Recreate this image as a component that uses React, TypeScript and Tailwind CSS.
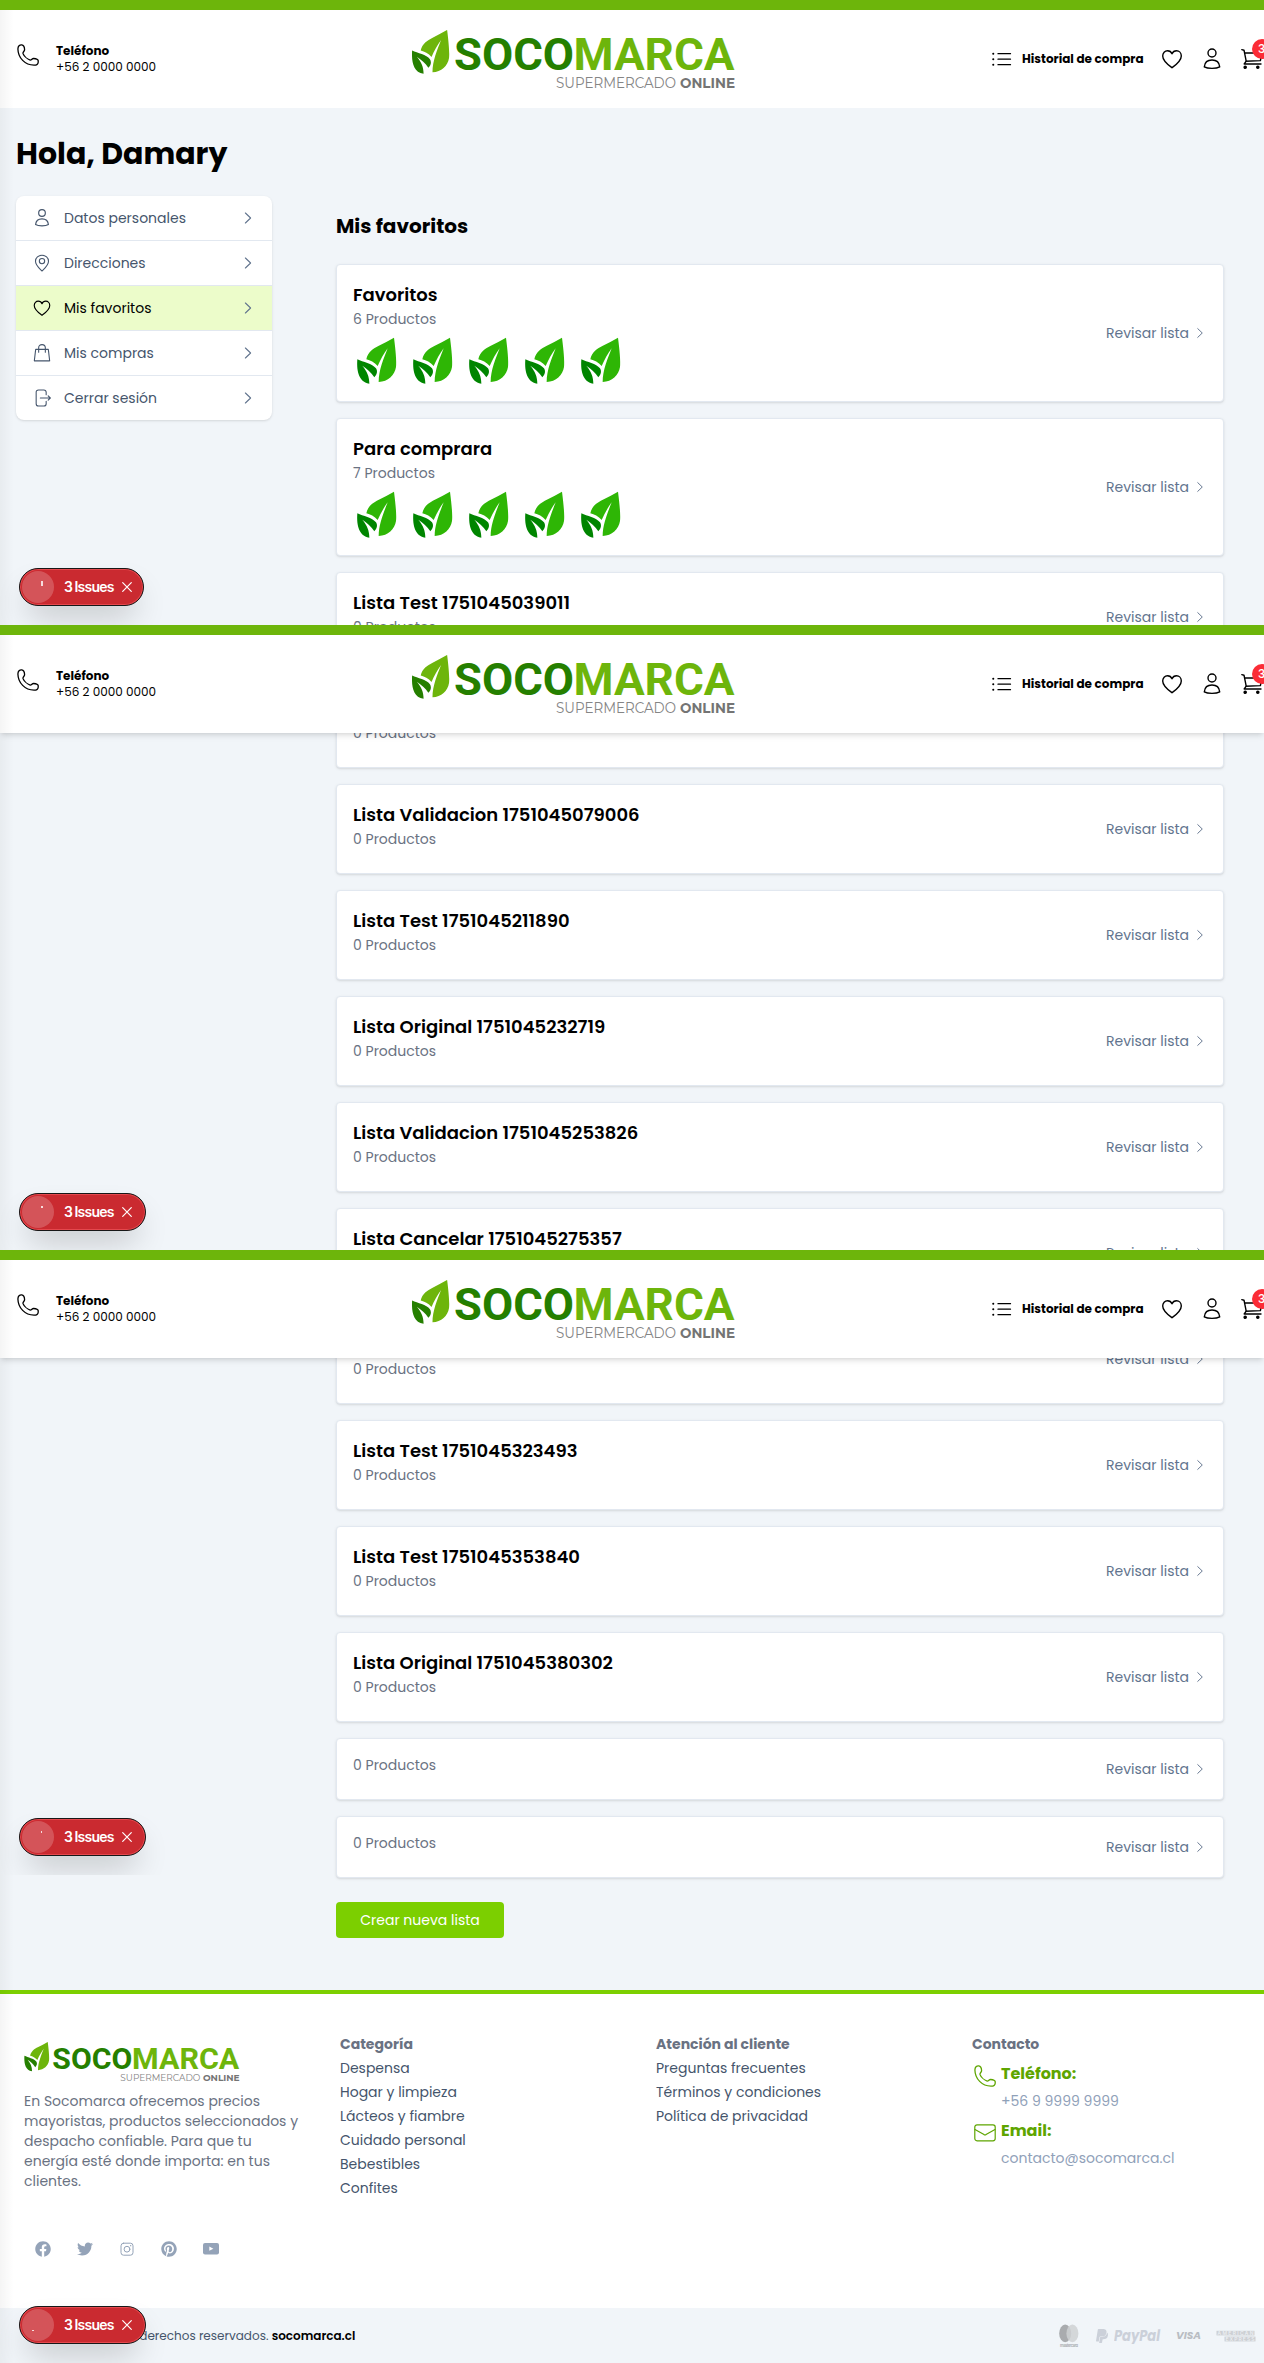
import React from "react";
import { FaFacebook, FaPaypal, FaPinterest, FaTwitter } from "react-icons/fa";

type IconProps = { className?: string };

const thin = {
  fill: "none",
  stroke: "currentColor",
  strokeLinecap: "round" as const,
  strokeLinejoin: "round" as const,
};

function LeafShape({ light, dark }: { light: string; dark: string }) {
  return (
    <>
      <path
        fill={light}
        d="M123 2C128 40 131 75 129 90C125 115 105 134 77 135C77 100 92 65 104 34C92 50 82 69 74 87C64 76 52 70 40 67C44 45 62 34 76 27C92 19 108 11 123 2Z"
      />
      <path
        fill={dark}
        d="M13 67C11 95 14 135 49 140C49 118 42 103 28 86C42 96 55 106 64 121C73 112 74 102 69 94C58 80 30 75 13 67Z"
      />
    </>
  );
}

function ProductLeaf() {
  return (
    <svg viewBox="0 0 144 144" className="h-12 w-12">
      <LeafShape light="#2eb605" dark="#008500" />
    </svg>
  );
}

function Logo({ className }: IconProps) {
  return (
    <svg viewBox="0 0 323 60" className={className}>
      <g transform="translate(-4 -0.7) scale(0.318)">
        <LeafShape light="#6db50b" dark="#257f00" />
      </g>
      <g fontFamily="Roboto, sans-serif" fontWeight="700" fontSize="45">
        <text x="42" y="40" fill="#257f00" textLength="120" lengthAdjust="spacingAndGlyphs">
          SOCO
        </text>
        <text x="161.5" y="40" fill="#6db50b" textLength="161" lengthAdjust="spacingAndGlyphs">
          MARCA
        </text>
      </g>
      <g fontFamily="Montserrat, Inter, sans-serif" fontSize="14">
        <text x="144" y="58" fill="#858585" fontWeight="400" textLength="120" lengthAdjust="spacingAndGlyphs">
          SUPERMERCADO
        </text>
        <text x="268" y="58" fill="#747474" fontWeight="700" textLength="55" lengthAdjust="spacingAndGlyphs">
          ONLINE
        </text>
      </g>
    </svg>
  );
}

function PhoneIcon({ className }: IconProps) {
  return (
    <svg viewBox="0 0 22 22" className={className} {...thin} strokeWidth="1.3">
      <path d="M4.8.9C2.6.7.9 2.2.9 5C1.1 14 8 21 17 21.2C19.8 21.2 21.1 20 21.2 18.2V16.6C21 15.2 18.4 14.7 16.6 14.5C15 14.4 14.8 16.2 13.2 16.1C10.4 15.2 7 12 6 9.4C5.7 7.9 7.7 7.2 7.6 5.5C7.5 3.6 7.2 1.3 4.8.9Z" />
    </svg>
  );
}

function HeartIcon({ className }: IconProps) {
  return (
    <svg viewBox="0 0 24 24" className={className} {...thin} strokeWidth="1.4">
      <path d="M12 20.7C9.2 18.6 2.7 14 2.7 8.9C2.7 5.9 4.9 3.8 7.5 3.8C9.5 3.8 11.2 4.9 12 6.8C12.8 4.9 14.5 3.8 16.5 3.8C19.1 3.8 21.3 5.9 21.3 8.9C21.3 14 14.8 18.6 12 20.7Z" />
    </svg>
  );
}

function UserIcon({ className }: IconProps) {
  return (
    <svg viewBox="0 0 24 24" className={className} {...thin} strokeWidth="1.4">
      <circle cx="12" cy="6" r="4" />
      <path d="M12 13C7.6 13 4.7 15.6 4.3 19.8C6.2 21 8.8 21.4 12 21.4C15.2 21.4 17.8 21 19.7 19.8C19.3 15.6 16.4 13 12 13Z" />
    </svg>
  );
}

function PinIcon({ className }: IconProps) {
  return (
    <svg viewBox="0 0 24 24" className={className} {...thin} strokeWidth="1.3">
      <path d="M12 21.6C9 18.6 4.2 14.6 4.2 9.8C4.2 5.5 7.7 2.6 12 2.6S19.8 5.5 19.8 9.8C19.8 14.6 15 18.6 12 21.6Z" />
      <circle cx="12" cy="9.7" r="3.2" />
    </svg>
  );
}

function BagIcon({ className }: IconProps) {
  return (
    <svg viewBox="0 0 24 24" className={className} {...thin} strokeWidth="1.3">
      <path d="M4.4 7.6H19.6L21.2 21.4H2.8Z" />
      <path d="M8 11V5.8C8 3.3 9.7 1.9 12 1.9S16 3.3 16 5.8V11" />
    </svg>
  );
}

function LogoutIcon({ className }: IconProps) {
  return (
    <svg viewBox="0 0 24 24" className={className} {...thin} strokeWidth="1.3">
      <path d="M17 8V5.2C17 3.4 16 2.4 14.2 2.4H7.8C6 2.4 5 3.4 5 5.2V18.8C5 20.6 6 21.6 7.8 21.6H14.2C16 21.6 17 20.6 17 18.8V16" />
      <path d="M10 12H22M19.4 9.4L22 12L19.4 14.6" />
    </svg>
  );
}

function ChevronIcon({ className }: IconProps) {
  return (
    <svg viewBox="0 0 16 16" className={className} {...thin} strokeWidth="1.1">
      <path d="M5.4 3L10.6 8L5.4 13" />
    </svg>
  );
}

function ListIcon({ className }: IconProps) {
  return (
    <svg viewBox="0 0 20 14" className={className} {...thin} strokeWidth="1.3">
      <path d="M6 1.7H18.5M6 7.2H18.5M6 12.7H18.5" />
      <path d="M1.2 1.7H1.3M1.2 7.2H1.3M1.2 12.7H1.3" strokeWidth="2" />
    </svg>
  );
}

function CartIcon({ className }: IconProps) {
  return (
    <svg viewBox="0 0 24 24" className={className} {...thin} strokeWidth="1.4">
      <path d="M.8 2.6L3 3.2L5.2 14.2M4 6H21L19.4 13.6L4.8 14.2M5.2 14.2L3.2 17H20" />
      <circle cx="4.2" cy="20.3" r="1.1" fill="currentColor" />
      <circle cx="16.8" cy="20.3" r="1.1" fill="currentColor" />
    </svg>
  );
}

function MailIcon({ className }: IconProps) {
  return (
    <svg viewBox="0 0 22 18" className={className} {...thin} strokeWidth="1.2">
      <rect x=".8" y=".8" width="20.4" height="16" rx="2.2" />
      <path d="M1 5.6L10 10.6Q11 11.1 12 10.6L21 5.6" />
    </svg>
  );
}

function Header({ raised }: { raised?: boolean }) {
  return (
    <header
      className={
        raised
          ? "relative z-10 h-[108px] border-t-10 border-[#6db50b] bg-white shadow-md"
          : "relative z-10 h-[108px] border-t-10 border-[#6db50b] bg-white"
      }
    >
      <div className="flex h-full items-center pl-[17px]">
        <div className="flex w-[395px] shrink-0 items-center gap-[17px]">
          <PhoneIcon className="mb-2 h-[22px] w-[22px]" />
          <div className="text-xs">
            <p className="font-bold">Teléfono</p>
            <p>+56 2 0000 0000</p>
          </div>
        </div>
        <Logo className="h-[60px] w-[323px] shrink-0 translate-y-px" />
        <div className="ml-[257px] flex shrink-0 items-center">
          <ListIcon className="h-[14px] w-5" />
          <span className="ml-[10px] w-[123px] text-xs font-bold whitespace-nowrap">
            Historial de compra
          </span>
          <HeartIcon className="ml-[15px] h-6 w-6" />
          <UserIcon className="ml-4 h-6 w-6" />
          <div className="relative ml-[17px]">
            <CartIcon className="h-6 w-6" />
            <span className="absolute -top-2 left-[11px] flex h-5 w-5 items-center justify-start rounded-full bg-[#fb2c36] pl-[6px] text-xs font-medium text-white">
              3
            </span>
          </div>
        </div>
      </div>
    </header>
  );
}

function ListCard({ title, count }: { title?: string; count: number }) {
  return (
    <article className="flex items-center justify-between rounded border border-slate-200 bg-white p-4 shadow-sm">
      <div>
        {title && <h3 className="text-lg font-semibold">{title}</h3>}
        <p className="text-sm text-gray-500">{count} Productos</p>
        <div className="mt-2 flex gap-2">
          {count > 0 && [0, 1, 2, 3, 4].map((n) => <ProductLeaf key={n} />)}
        </div>
      </div>
      <a className="flex items-center gap-1 text-sm text-slate-500">
        Revisar lista
        <ChevronIcon className="h-[14px] w-[14px]" />
      </a>
    </article>
  );
}

function IssuesPill({ wide, mark }: { wide?: boolean; mark: string }) {
  return (
    <div className="absolute bottom-[19px] left-[19px] z-20 [font-family:Inter,sans-serif]">
      <div
        className={
          wide
            ? "flex h-[38px] w-[127px] items-center rounded-full border border-[#171717] bg-[#ca2a30] shadow-[inset_0_0_0_1px_#e5484d,0_16px_32px_-8px_rgba(0,0,0,0.24)]"
            : "flex h-[38px] w-[125px] items-center rounded-full border border-[#171717] bg-[#ca2a30] shadow-[inset_0_0_0_1px_#e5484d,0_16px_32px_-8px_rgba(0,0,0,0.24)]"
        }
      >
        <span className="relative ml-[2px] h-8 w-8 rounded-full bg-white/20">
          <span className={mark} />
        </span>
        <span className="ml-[10px] w-[50px] text-sm font-semibold tracking-[-0.75px] whitespace-nowrap text-white [word-spacing:-0.5px]">
          3 Issues
        </span>
        <svg viewBox="0 0 12 12" className="ml-[7px] h-3 w-3" {...thin} stroke="#fff" strokeWidth="1.2">
          <path d="M1.7 1.7L10.3 10.3M10.3 1.7L1.7 10.3" />
        </svg>
      </div>
    </div>
  );
}

const menu = [
  { label: "Datos personales", Icon: UserIcon },
  { label: "Direcciones", Icon: PinIcon },
  { label: "Mis favoritos", Icon: HeartIcon },
  { label: "Mis compras", Icon: BagIcon },
  { label: "Cerrar sesión", Icon: LogoutIcon },
];

function SideMenu() {
  return (
    <nav className="w-64 divide-y divide-slate-200 overflow-hidden rounded-lg bg-white shadow-sm">
      {menu.map(({ label, Icon }) => (
        <a
          key={label}
          className={
            label === "Mis favoritos"
              ? "flex h-[45px] items-center gap-3 bg-[#ecfcca] px-4 text-sm text-black"
              : "flex h-[45px] items-center gap-3 px-4 text-sm text-slate-600 last:h-11"
          }
        >
          <Icon className="h-5 w-5" />
          <span>{label}</span>
          <ChevronIcon className="ml-auto h-4 w-4 text-slate-500" />
        </a>
      ))}
    </nav>
  );
}

function EdgeShade() {
  return (
    <div className="pointer-events-none absolute top-[10px] bottom-0 left-0 z-10 w-3.5 bg-linear-to-r from-black/4 to-transparent" />
  );
}

function Footer() {
  return (
    <footer className="border-t-4 border-[#7ccf00] bg-white">
      <div className="grid h-[314px] grid-cols-4 gap-12 px-6 pt-10 text-sm">
        <div className="mr-[-8px]">
          <Logo className="mt-2 h-[40px] w-[216px]" />
          <p className="mt-[9px] whitespace-nowrap text-gray-500">
            En Socomarca ofrecemos precios
            <br />
            mayoristas, productos seleccionados y
            <br />
            despacho confiable. Para que tu
            <br />
            energía esté donde importa: en tus
            <br />
            clientes.
          </p>
          <div className="mt-[50px] ml-[11px] flex gap-[26px] text-[#94a3b8]">
            <FaFacebook className="h-4 w-4" />
            <FaTwitter className="h-4 w-4" />
            <svg viewBox="0 0 16 16" className="h-4 w-4" {...thin} strokeWidth="1">
              <rect x="2" y="2.2" width="12" height="12" rx="2.6" />
              <circle cx="8" cy="8.2" r="2.9" />
              <path d="M11.6 4.7H11.7" strokeWidth="1.3" />
            </svg>
            <FaPinterest className="h-4 w-4" />
            <svg viewBox="0 0 16 16" className="h-4 w-4">
              <rect y="2" width="16" height="11.4" rx="2" fill="currentColor" />
              <path d="M6.3 5.6L10.4 7.7L6.3 9.8Z" fill="#fff" />
            </svg>
          </div>
        </div>
        <div className="flex flex-col gap-1 text-slate-600">
          <h4 className="font-bold text-gray-500">Categoría</h4>
          <a>Despensa</a>
          <a>Hogar y limpieza</a>
          <a>Lácteos y fiambre</a>
          <a>Cuidado personal</a>
          <a>Bebestibles</a>
          <a>Confites</a>
        </div>
        <div className="flex flex-col gap-1 text-slate-600">
          <h4 className="font-bold text-gray-500">Atención al cliente</h4>
          <a>Preguntas frecuentes</a>
          <a>Términos y condiciones</a>
          <a>Política de privacidad</a>
        </div>
        <div className="text-slate-400">
          <h4 className="font-bold text-gray-500">Contacto</h4>
          <div className="mt-2 flex gap-[5px] pl-[2px]">
            <PhoneIcon className="mt-[3px] h-[22px] w-[22px] text-[#5ea500]" />
            <div>
              <p className="text-base font-bold text-[#5ea500]">Teléfono:</p>
              <p className="mt-[5px]">+56 9 9999 9999</p>
            </div>
          </div>
          <div className="mt-2 flex gap-[5px] pl-[2px]">
            <MailIcon className="mt-[5px] h-[18px] w-[22px] text-[#5ea500]" />
            <div>
              <p className="text-base font-bold text-[#5ea500]">Email:</p>
              <p className="mt-[5px]">contacto@socomarca.cl</p>
            </div>
          </div>
        </div>
      </div>
      <div className="flex h-[55px] items-center justify-between bg-slate-100 pr-2 pl-[35px]">
        <p className="text-xs whitespace-nowrap text-slate-600">
          © 2025 Todos los derechos reservados. <b className="font-semibold text-black">socomarca.cl</b>
        </p>
        <div className="flex items-center text-[#cbd0d9]">
          <svg viewBox="0 0 20 24" className="h-6 w-5">
            <ellipse cx="6.2" cy="9.4" rx="6" ry="8.8" fill="#a9abae" />
            <ellipse cx="13.4" cy="9.4" rx="6" ry="8.8" fill="#cfd1d4" fillOpacity=".85" />
            <text x="1" y="23" fontSize="4" fontWeight="700" fill="#aeb0b4" textLength="18" fontFamily="Inter, sans-serif">
              mastercard
            </text>
          </svg>
          <FaPaypal className="ml-4 h-4 w-[14px]" />
          <svg viewBox="0 0 48 16" className="ml-[5px] h-4 w-12">
            <text x="0" y="13" fontSize="15" fontWeight="700" fontStyle="italic" fill="currentColor" textLength="46" lengthAdjust="spacingAndGlyphs">
              PayPal
            </text>
          </svg>
          <svg viewBox="0 0 26 10" className="ml-[14px] h-[10px] w-[26px]">
            <text x="0" y="8" fontSize="9.5" fontWeight="700" fontStyle="italic" fill="#b9bdc3" textLength="25" lengthAdjust="spacingAndGlyphs">
              VISA
            </text>
          </svg>
          <svg viewBox="0 0 40 12" className="ml-[14px] h-3 w-10">
            <rect x=".5" y=".8" width="38" height="4.6" fill="#cdd0d4" />
            <rect x="8.5" y="6.6" width="31" height="4.8" fill="#cdd0d4" />
            <g fontFamily="Inter, sans-serif" fontSize="5" fontWeight="500" fill="#eef1f5">
              <text x="1.5" y="5" textLength="36">AMERICAN</text>
              <text x="9.5" y="10.9" textLength="29">EXPRESS</text>
            </g>
          </svg>
        </div>
      </div>
    </footer>
  );
}

export default function App() {
  return (
    <div className="w-[1264px] overflow-hidden bg-slate-100 text-black [font-family:Poppins,Inter,sans-serif]">
      <section className="relative h-[625px] overflow-hidden">
        <Header />
        <EdgeShade />
        <div className="px-4 pt-7">
          <h1 className="text-3xl font-bold">Hola, Damary</h1>
          <div className="mt-6 flex items-start gap-16">
            <SideMenu />
            <div className="w-[888px] pt-4">
              <h2 className="text-xl font-bold">Mis favoritos</h2>
              <div className="mt-6 flex flex-col gap-4">
                <ListCard title="Favoritos" count={6} />
                <ListCard title="Para comprara" count={7} />
                <ListCard title="Lista Test 1751045039011" count={0} />
              </div>
            </div>
          </div>
        </div>
        <IssuesPill mark="absolute top-[10px] left-[19px] h-[5px] w-[2px] bg-white/80" />
      </section>

      <section className="relative h-[625px] overflow-hidden">
        <Header raised />
        <EdgeShade />
        <div className="mt-[-55px] ml-[336px] flex w-[888px] flex-col gap-4">
          <ListCard title="Lista Original 1751045058732" count={0} />
          <ListCard title="Lista Validacion 1751045079006" count={0} />
          <ListCard title="Lista Test 1751045211890" count={0} />
          <ListCard title="Lista Original 1751045232719" count={0} />
          <ListCard title="Lista Validacion 1751045253826" count={0} />
          <ListCard title="Lista Cancelar 1751045275357" count={0} />
        </div>
        <IssuesPill wide mark="absolute top-[10px] left-[19px] h-[2px] w-[2px] bg-white/80" />
      </section>

      <section className="relative h-[1113px] overflow-hidden">
        <Header raised />
        <EdgeShade />
        <div className="mt-[-44px] ml-[336px] flex w-[888px] flex-col gap-4">
          <ListCard title="Lista Cancelar 1751045302112" count={0} />
          <ListCard title="Lista Test 1751045323493" count={0} />
          <ListCard title="Lista Test 1751045353840" count={0} />
          <ListCard title="Lista Original 1751045380302" count={0} />
          <ListCard count={0} />
          <ListCard count={0} />
        </div>
        <button className="mt-6 mb-[52px] ml-[336px] h-9 w-[168px] rounded bg-[#7ccf00] text-sm text-white">
          Crear nueva lista
        </button>
        <Footer />
        <div className="pointer-events-none absolute top-0 left-0 h-[625px] w-[336px] overflow-hidden">
          <IssuesPill wide mark="absolute top-[10px] left-[19px] h-[2px] w-px bg-white/80" />
        </div>
        <IssuesPill wide mark="absolute top-[21px] left-[10px] h-px w-[2px] bg-white/80" />
      </section>
    </div>
  );
}
